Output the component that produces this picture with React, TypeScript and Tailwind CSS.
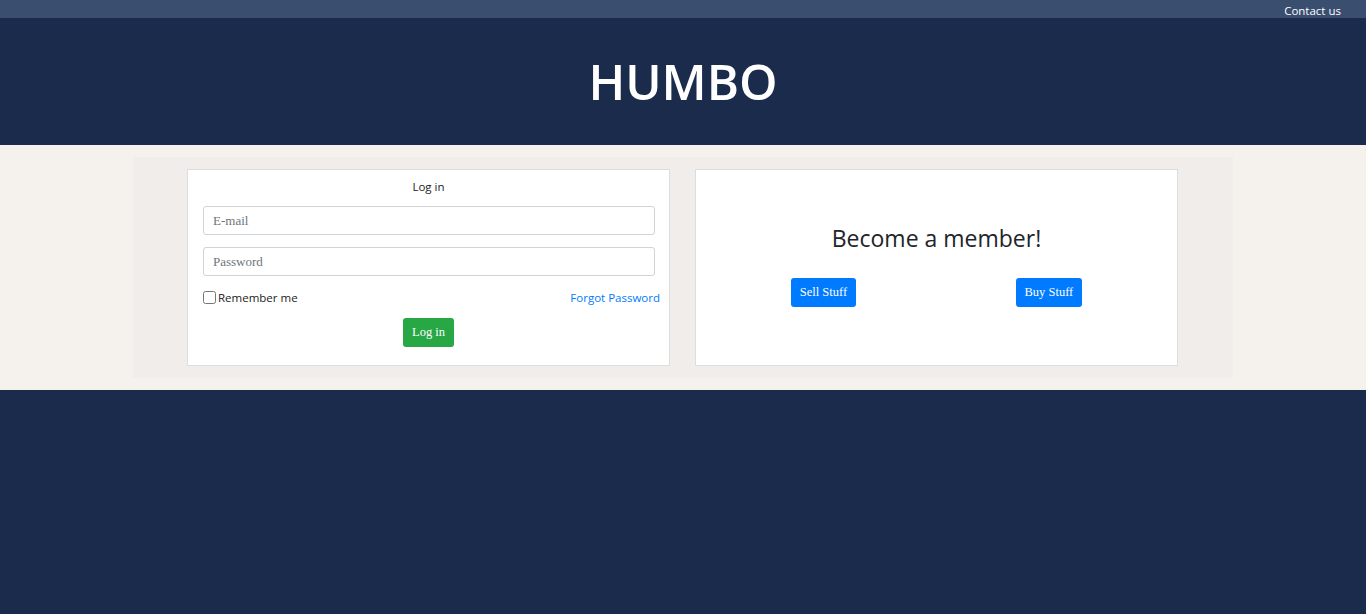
export default function App() {
  return (
    <div className="min-h-screen flex flex-col bg-[#1a2b4b]" style={{ fontFamily: '"Open Sans", "Noto Sans", sans-serif' }}>
      {/* Top bar */}
      <div className="h-[18px] bg-[#3a4e70] flex items-center justify-end pr-[25px] pt-[3px]">
        <a href="#" className="text-white text-[11.5px] leading-none">Contact us</a>
      </div>

      {/* Header */}
      <div className="h-[127px] flex items-center justify-center">
        <h1 className="text-white text-[49px] font-semibold leading-none">HUMBO</h1>
      </div>

      {/* Main */}
      <div className="bg-[#f5f2ee] py-[12px]">
        <div className="w-[1100px] mx-auto bg-[#f0edeb] py-[12px] px-[54px] flex gap-[25px]">
          {/* Login card */}
          <div className="w-[483px] h-[197px] bg-white border border-[#dddddd] px-[15px] pt-[8px]">
            <div className="text-center text-[11.5px] text-[#222] leading-[17px]">Log in</div>
            <input
              className="mt-[11px] block w-[452px] h-[29px] border border-[#ced4da] rounded-[3px] px-[9px] text-[13px] placeholder:text-[#6c757d]"
              style={{ fontFamily: '"Liberation Serif", serif' }}
              placeholder="E-mail"
            />
            <input
              type="password"
              className="mt-[12px] block w-[452px] h-[29px] border border-[#ced4da] rounded-[3px] px-[9px] text-[13px] placeholder:text-[#6c757d]"
              style={{ fontFamily: '"Liberation Serif", serif' }}
              placeholder="Password"
            />
            <div className="mt-[15px] flex items-center justify-between w-[457px] text-[11.5px] leading-none">
              <label className="flex items-center gap-[2px] text-[#222]">
                <input type="checkbox" className="w-[13px] h-[13px] m-0" />
                Remember me
              </label>
              <a href="#" className="text-[#007bff]">Forgot Password</a>
            </div>
            <div className="mt-[14px] flex justify-center">
              <button
                className="h-[29px] px-[9px] rounded-[3px] bg-[#28a745] text-white text-[12.5px]"
                style={{ fontFamily: '"Liberation Serif", serif' }}
              >
                Log in
              </button>
            </div>
          </div>

          {/* Member card */}
          <div className="w-[483px] h-[197px] bg-white border border-[#dddddd] px-[15px] pt-[51px]">
            <h2 className="text-center text-[23px] font-medium text-[#212529] leading-[34px]">Become a member!</h2>
            <div className="mt-[23px] flex justify-around">
              <button
                className="h-[29px] px-[9px] rounded-[3px] bg-[#007bff] text-white text-[12.5px]"
                style={{ fontFamily: '"Liberation Serif", serif' }}
              >
                Sell Stuff
              </button>
              <button
                className="h-[29px] px-[9px] rounded-[3px] bg-[#007bff] text-white text-[12.5px]"
                style={{ fontFamily: '"Liberation Serif", serif' }}
              >
                Buy Stuff
              </button>
            </div>
          </div>
        </div>
      </div>

      <div className="flex-1" />
    </div>
  );
}
